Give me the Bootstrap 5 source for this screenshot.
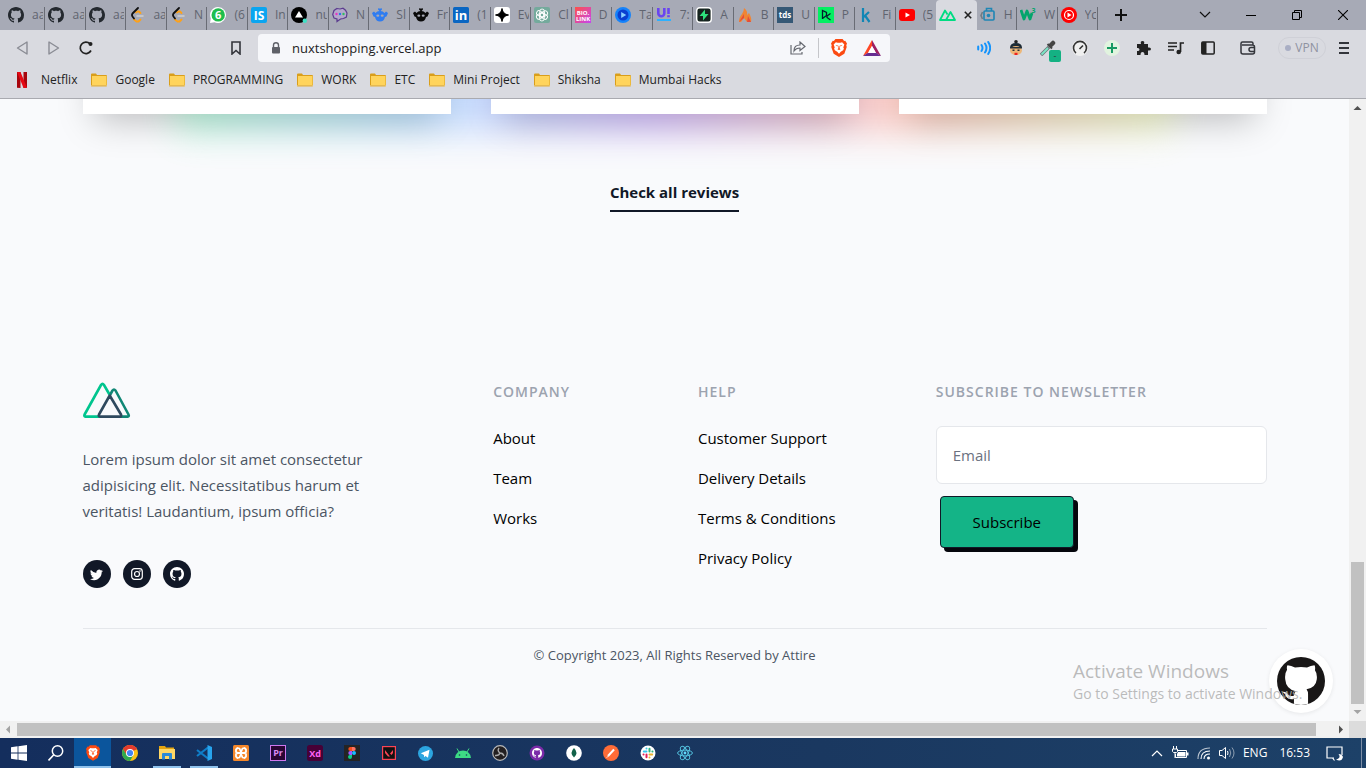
<!DOCTYPE html>
<html lang="en">
<head>
<meta charset="utf-8">
<meta name="viewport" content="width=device-width, initial-scale=1">
<title>nuxtshopping.vercel.app</title>
<link href="https://cdn.jsdelivr.net/npm/bootstrap@5.3.0/dist/css/bootstrap.min.css" rel="stylesheet">
<style>
  body { font-family: "Open Sans", "Noto Sans", sans-serif; font-size: 15px; line-height: 24px; color: #000; }
  svg { display: block; flex: none; }
  svg text { font-family: "Open Sans", sans-serif; font-weight: 700; }
  button { border: 0; background: none; padding: 0; color: inherit; }
  a { color: inherit; text-decoration: none; }

  /* tab strip */
  .tabstrip { height: 30px; background: #a7aab6; padding-left: 5px; }
  .tab-item { flex: 1 1 0; min-width: 0; height: 30px; padding: 0 2px 0 3px; gap: 8px; font-size: 12px; color: #60646f; position: relative; }
  .tab-item:not(.current)::after { content: ""; position: absolute; right: 0; top: 7px; bottom: 0; width: 1px; background: #696c75; }
  .tab-item span { overflow: hidden; white-space: nowrap; flex: 1 1 0; }
  .tab-item.current { background: #d9dae0; border-radius: 4px 4px 0 0; }
  .tab-item.before-current::after { display: none; }
  .new-tab { width: 46px; height: 30px; flex: none; }
  .win-controls { flex: none; margin-left: 38px; }
  .win-btn { width: 46px; height: 30px; }

  /* toolbar and bookmarks */
  .toolbar { height: 36px; background: #d9dae0; padding: 0 6px; color: #33353b; }
  .tool { width: 32px; height: 32px; position: relative; }
  .address { flex: 1 1 0; margin: 0 78px 0 118px; }
  .urlbox { height: 28px; border-radius: 4px; background: #f6f7fa; padding: 0 9px 0 12px; margin-left: 6px; }
  .urlbox input { border: 0; outline: 0; background: none; font-size: 13px; line-height: 20px; padding: 0; color: #222; min-width: 0; margin-left: 10px; }
  .tag-dot { position: absolute; right: 3px; bottom: 2px; width: 12px; height: 12px; border-radius: 2px; background: #14b183; font-size: 9px; line-height: 11px; text-align: center; }
  .vpn { width: 48px; height: 22px; border: 1px solid #cfd0d7; border-radius: 11px; font-size: 12px; color: #8f92a0; margin: 0 2px 0 14px; line-height: 20px; }
  .vpn i { width: 6px; height: 6px; border-radius: 50%; background: #a9aec4; margin-right: 4px; }
  .bookmarks { height: 33px; background: #d9dae0; border-bottom: 1px solid #a9aab0; padding: 0 14px 4px; gap: 14px; font-size: 12px; color: #222; }
  .bookmarks a { gap: 8px; white-space: nowrap; }
  .bookmarks a:first-child { gap: 11px; }

  /* page */
  .viewport { background: #f9fafc; overflow: hidden; position: relative; min-width: 0; }
  .wrap { max-width: 1184px; margin: 0 auto; }
  .reviews { display: grid; grid-template-columns: repeat(3, 1fr); gap: 40px; position: relative; }
  .glow { position: absolute; left: 8%; right: 8%; bottom: -18px; height: 200px; opacity: .31; filter: blur(18px); background: linear-gradient(90deg, #44ff9a -1%, #44b0ff 23%, #8b44ff 48%, #ff6644 73%, #ebff70 99%); }
  .review { height: 15px; background: #fff; position: relative; }
  .review::before { content: ""; position: absolute; inset: -60px 0 0; box-shadow: 0 18px 36px -12px rgba(0,0,0,.25); z-index: -1; }
  .review-row { isolation: isolate; }
  .all-reviews { margin-top: 66px; padding-bottom: 6px; border-bottom: 2px solid #111827; font-weight: 700; color: #111827; }
  .foot { margin-top: 170px; }
  .foot-grid { display: grid; grid-template-columns: 411fr 205fr 238fr 331fr; }
  .blurb { color: #4b5563; line-height: 26px; max-width: 290px; margin: 28px 0 36px; }
  .social { width: 28px; height: 28px; border-radius: 50%; background: #111827; color: #fff; }
  .foot h2, .foot label { font-size: 14px; line-height: 20px; font-weight: 600; letter-spacing: 1px; color: #9ca3af; margin: 0; display: block; }
  .foot ul { margin: 24px 0 0; padding: 0; list-style: none; }
  .foot li { height: 40px; }
  .email { height: 58px; border: 1px solid #e5e7eb; border-radius: 6px; padding: 0 16px; margin-top: 24px; font-size: 15px; width: 100%; background: #fff; }
  .email::placeholder { color: #6b7280; }
  .subscribe { width: 134px; height: 52px; margin: 12px 4px 0; border: 1px solid #111827; border-radius: 4px; background: #14b487; box-shadow: 4px 4px 0 #05060c; }
  .legal { margin-top: 40px; border-top: 1px solid #e5e7eb; padding-top: 14px; font-size: 13px; color: #4b5563; }
  .gh-float { position: absolute; right: 16px; bottom: 8px; width: 64px; height: 64px; border-radius: 50%; background: #fff; box-shadow: 0 1px 4px rgba(0,0,0,.08); color: #191717; }
  .watermark { position: absolute; left: calc(100% - 293px); bottom: 64px; color: rgba(175,175,175,.85); font-size: 14px; line-height: 20px; white-space: nowrap; pointer-events: none; }
  .watermark strong { display: block; font-weight: 400; font-size: 19px; line-height: 26px; }

  /* scroll bars */
  .vbar { width: 17px; background: #f1f1f1; }
  .hbar { height: 17px; background: #f1f1f1; }
  .bar-corner { width: 17px; height: 17px; background: #dcdcdc; }
  .arrow { width: 17px; height: 17px; }
  .vthumb { width: 13px; background: #c1c1c1; flex: 0 0 142px; }
  .hthumb { height: 13px; background: #c1c1c1; flex: 1; margin-right: 16px; }

  /* task bar */
  .taskbar { height: 30px; background: linear-gradient(90deg, #142e5d, #1a3860 60%, #1d4168); color: #fff; font-size: 12px; }
  .task { width: 37px; height: 30px; }
  .task.running { background: linear-gradient(#8fc2ec, #8fc2ec) center bottom / 28px 2px no-repeat; }
  .task.focused { background: linear-gradient(#8fc2ec, #8fc2ec) center bottom / 100% 2px no-repeat, #0b559c; }
  .tray { gap: 8px; padding-right: 4px; }
  .desk-edge { border-left: 1px solid #7d8ea6; height: 30px; margin-left: 10px; }
</style>
</head>
<body class="vh-100 d-flex flex-column overflow-hidden">

<svg width="0" height="0" class="position-absolute" aria-hidden="true">
  <symbol id="octocat" viewBox="0 0 16 16"><path fill="currentColor" d="M8 0C3.58 0 0 3.58 0 8c0 3.54 2.29 6.53 5.47 7.59.4.07.55-.17.55-.38 0-.19-.01-.82-.01-1.49-2.01.37-2.53-.49-2.69-.94-.09-.23-.48-.94-.82-1.13-.28-.15-.68-.52-.01-.53.63-.01 1.08.58 1.23.82.72 1.21 1.87.87 2.33.66.07-.52.28-.87.51-1.07-1.78-.2-3.64-.89-3.64-3.95 0-.87.31-1.59.82-2.15-.08-.2-.36-1.02.08-2.12 0 0 .67-.21 2.2.82.64-.18 1.32-.27 2-.27.68 0 1.36.09 2 .27 1.53-1.04 2.2-.82 2.2-.82.44 1.1.16 1.92.08 2.12.51.56.82 1.27.82 2.15 0 3.07-1.87 3.75-3.65 3.95.29.25.54.73.54 1.48 0 1.07-.01 1.93-.01 2.2 0 .21.15.46.55.38A8.012 8.012 0 0 0 16 8c0-4.42-3.58-8-8-8z"/></symbol>
  <symbol id="badge-cat" viewBox="0 0 32 32"><circle cx="16" cy="16" r="16" fill="#191717"/><path fill="#fff" d="M6.700 8.500q-.4-2 .3-3 2.500.3 5 1.500 4-.8 8 0 2.500-1.300 5-1.500.7 1 .3 3.300Q27 11 26.500 15q-.6 5.500-6.800 6.500 1 1.500 1 3V31.200a16 16 0 0 1-9.400 0V28q-4.500.8-5.800-3-.6-1-1.800-1.700 2.400-.6 3.900 2 1.200 1.200 3.600.5.300-1.900 1.300-3Q6 21.500 5.500 15 5 11 6.700 8.500z"/></symbol>
  <symbol id="leet" viewBox="0 0 16 16"><g fill="none" stroke-width="1.800" stroke-linecap="round" stroke-linejoin="round"><path stroke="#ffa116" d="m5 12.500 2.500 2h2l2-2M7 5.500l1.500-1H10l1.500 1.500"/><path stroke="#111" d="M9 1 3.500 6.500Q2.500 8 3.500 9.500L5 11.500"/><path stroke="#d0d0d0" stroke-width="1.500" d="M8 9h6"/></g></symbol>
  <symbol id="robot" viewBox="0 0 16 16"><path fill="currentColor" d="M6.500 1 8 1.800 9.500 1l.5 1.500L8.500 4q2.500.2 4 2L14 4.500l2 1.500-1.500 3.500-1.500.5q-1 4.500-5 4.500T3 10l-1.500-.5L0 6l2-1.500L3.500 6q1.500-1.800 4-2L6 2.500z"/><ellipse cx="5.800" cy="8.700" rx="1.500" ry="1.100" fill="#a7aab6"/><ellipse cx="10.200" cy="8.700" rx="1.500" ry="1.100" fill="#a7aab6"/></symbol>
  <symbol id="folder" viewBox="0 0 16 14"><path fill="#d99e1b" d="M0 1.500Q0 .5 1 .5h4l1 1.500h9q1 0 1 1V12H0z"/><path fill="#ffd45c" d="M1 3h14.500v9.500H1z"/><path fill="#e5b037" d="M0 12.300h15.800v.7q0 .6-.8.6H1q-1 0-1-.6z"/></symbol>
  <symbol id="lion" viewBox="0 0 18 20"><path fill="#fb4a12" d="M5 0h8l1.800 2L16 1.800 18 5l-.8 2 .5 2L15 16.500 9 20l-6-3.500L.3 9l.5-2L0 5l2-3.200L3.200 2z"/><path fill="#fff" d="m5.500 3.500 2 .5h3l2-.5L15 6l-1.200 3.500.7 1-.8 2-2.700 1.700L9 16.500l-2-2.300-2.700-1.700-.8-2 .7-1L3 6z"/><path fill="#fb4a12" d="m5 6.500 2.800.6-.6 1.200zM13 6.500l-2.800.6.6 1.200zM8.500 7.500h1l.3 3 1 .8L9 12.200l-1.800-.9 1-.8z"/></symbol>
</svg>

<header>
  <div class="tabstrip d-flex">
    <div class="d-flex flex-grow-1" role="tablist">
      <div class="tab-item d-flex align-items-center"><svg width="16" height="16" color="#24292f"><use href="#octocat"/></svg><span>aa</span></div>
      <div class="tab-item d-flex align-items-center"><svg width="16" height="16" color="#24292f"><use href="#octocat"/></svg><span>aa</span></div>
      <div class="tab-item d-flex align-items-center"><svg width="16" height="16" color="#24292f"><use href="#octocat"/></svg><span>aa</span></div>
      <div class="tab-item d-flex align-items-center"><svg width="16" height="16"><use href="#leet"/></svg><span>aa</span></div>
      <div class="tab-item d-flex align-items-center"><svg width="16" height="16"><use href="#leet"/></svg><span>N</span></div>
      <div class="tab-item d-flex align-items-center"><svg width="16" height="16" viewBox="0 0 16 16"><path fill="#fff" d="M8 0a8 8 0 1 1-3.500 15.200L0 16l.8-4.500A8 8 0 0 1 8 0z"/><circle cx="8.200" cy="7.900" r="6.700" fill="#1fbe4d"/><text x="8.200" y="12" font-size="11" text-anchor="middle" fill="#fff">6</text></svg><span>(6</span></div>
      <div class="tab-item d-flex align-items-center"><svg width="16" height="16" viewBox="0 0 16 16"><rect width="16" height="16" rx="2" fill="#0aa5f0"/><text x="8" y="12.500" font-size="12" text-anchor="middle" fill="#fff">IS</text></svg><span>In</span></div>
      <div class="tab-item d-flex align-items-center"><svg width="16" height="16" viewBox="0 0 16 16"><circle cx="8" cy="8" r="8" fill="#000"/><path fill="#fff" d="m8 4 4 6.500H4z"/><circle cx="13.800" cy="13.800" r="2.200" fill="#3fe0c5"/></svg><span>nu</span></div>
      <div class="tab-item d-flex align-items-center"><svg width="16" height="16" viewBox="0 0 16 16"><path fill="#b4a9cc" stroke="#5c3d8f" stroke-width="1.200" d="M5 1.500 8 2l3-.8 2.500 2L15 6l-.6 4-2.900 1.500L8.500 12 5 14.500V12l-3-1-1.300-3.500L2 3.500z"/><circle cx="4.500" cy="7" r="1.200" fill="#e735c2"/><circle cx="8" cy="7" r="1.200" fill="#2c74e8"/><circle cx="11.500" cy="7" r="1.200" fill="#30c060"/></svg><span>N</span></div>
      <div class="tab-item d-flex align-items-center"><svg width="16" height="16" color="#2f7cf0"><use href="#robot"/></svg><span>Sl</span></div>
      <div class="tab-item d-flex align-items-center"><svg width="16" height="16" color="#0a0a0a"><use href="#robot"/></svg><span>Fr</span></div>
      <div class="tab-item d-flex align-items-center"><svg width="16" height="16" viewBox="0 0 16 16"><rect width="16" height="16" rx="1.500" fill="#0a66c2"/><text x="8" y="13" font-size="13" text-anchor="middle" fill="#fff">in</text></svg><span>(1</span></div>
      <div class="tab-item d-flex align-items-center"><svg width="16" height="16" viewBox="0 0 16 16"><rect width="16" height="16" rx="3" fill="#fff"/><path d="M8 1.500Q8.800 7.200 14.500 8 8.800 8.800 8 14.500 7.200 8.800 1.500 8 7.200 7.200 8 1.500z" stroke="#000" stroke-width="1"/></svg><span>Ev</span></div>
      <div class="tab-item d-flex align-items-center"><svg width="16" height="16" viewBox="0 0 16 16"><rect width="16" height="16" rx="2" fill="#74aa9c"/><g fill="none" stroke="#fff" stroke-width=".9"><rect x="5.700" y="2" width="4.800" height="8" rx="2.400"/><rect x="5.700" y="2" width="4.800" height="8" rx="2.400" transform="rotate(60 8 8)"/><rect x="5.700" y="2" width="4.800" height="8" rx="2.400" transform="rotate(120 8 8)"/><rect x="5.700" y="2" width="4.800" height="8" rx="2.400" transform="rotate(180 8 8)"/><rect x="5.700" y="2" width="4.800" height="8" rx="2.400" transform="rotate(240 8 8)"/><rect x="5.700" y="2" width="4.800" height="8" rx="2.400" transform="rotate(300 8 8)"/></g></svg><span>Cl</span></div>
      <div class="tab-item d-flex align-items-center"><svg width="16" height="16" viewBox="0 0 16 16"><defs><linearGradient id="bl" x2="1" y2="1"><stop stop-color="#ff5148"/><stop offset="1" stop-color="#c445f2"/></linearGradient></defs><rect width="16" height="16" fill="url(#bl)"/><text x="8" y="7.500" font-size="6" text-anchor="middle" fill="#fff">BIO.</text><text x="8" y="13.500" font-size="6" text-anchor="middle" fill="#fff">LINK</text></svg><span>D</span></div>
      <div class="tab-item d-flex align-items-center"><svg width="16" height="16" viewBox="0 0 16 16"><circle cx="8" cy="8" r="8" fill="#1683fa"/><circle cx="8" cy="8" r="5.500" fill="#0b3fd0"/><path fill="#8ad0ff" d="m6.200 5 5 3-5 3z"/></svg><span>Ta</span></div>
      <div class="tab-item d-flex align-items-center"><svg width="16" height="16" viewBox="0 0 16 16"><path fill="none" stroke="#6a45f0" stroke-width="2.600" d="M2.300 1v5.200a3 3 0 0 0 6 0V1M12.500 1v6"/><path fill="#6a45f0" d="M11.200 8.200h2.600v2h-2.600z"/><path fill="#2cb1ff" d="M1 12h14v2H1z"/></svg><span>7:</span></div>
      <div class="tab-item d-flex align-items-center"><svg width="16" height="16" viewBox="0 0 16 16"><rect x=".7" y=".7" width="14.600" height="14.600" rx="3" fill="#16231e" stroke="#fff" stroke-width="1.400"/><path fill="#2ee27c" d="M9 2.500 3.500 9H7v4.500L12.500 7H9z"/></svg><span>A</span></div>
      <div class="tab-item d-flex align-items-center"><svg width="16" height="16" viewBox="0 0 16 16"><path fill="#f08534" d="M7 1q4 3 3 7l2-2q3 5 2 9h-4l-3-4-3 4H2q0-5 3-8 2-3 2-6z"/><path fill="#e54d3b" d="M2 15 7 7v4zM10 15l1-6 3 6z"/></svg><span>B</span></div>
      <div class="tab-item d-flex align-items-center"><svg width="16" height="16" viewBox="0 0 16 16"><rect width="16" height="16" fill="#355876"/><text x="8" y="11" font-size="8" text-anchor="middle" fill="#fff">tds</text></svg><span>U</span></div>
      <div class="tab-item d-flex align-items-center"><svg width="16" height="16" viewBox="0 0 16 16"><rect width="16" height="16" fill="#03ef62"/><path fill="none" stroke="#05192d" stroke-width="1.300" d="M4.500 12V3.500l4 2v3l-4 3M12.500 6.500 9 9v1.500l3.500 2.500"/></svg><span>P</span></div>
      <div class="tab-item d-flex align-items-center"><svg width="16" height="16" viewBox="0 0 16 16"><path fill="none" stroke="#1186b5" stroke-width="2.200" d="M5 1v14M11 5l-5.500 5M7 8.500 11.500 15"/></svg><span>Fi</span></div>
      <div class="tab-item before-current d-flex align-items-center"><svg width="16" height="16" viewBox="0 0 16 16"><rect y="2" width="16" height="12" rx="3" fill="#f00"/><path fill="#fff" d="m6.500 5.500 4.500 2.500-4.500 2.500z"/></svg><span>(5</span></div>
      <div class="tab-item current d-flex align-items-center"><svg width="17" height="16" viewBox="0 0 17 16"><path fill="none" stroke="#00dc82" stroke-width="1.800" stroke-linejoin="round" d="M9 13H1L6 3.500l2.500 4M7 13l4.500-8L16 13z"/></svg><button class="ms-n1" aria-label="Close tab"><svg width="8" height="8" viewBox="0 0 10 10"><path stroke="#222" stroke-width="2" d="m1 1 8 8m0-8-8 8"/></svg></button></div>
      <div class="tab-item d-flex align-items-center"><svg width="16" height="16" viewBox="0 0 16 16"><g fill="none" stroke="#1f86b5" stroke-width="1.600"><rect x="4" y="4" width="10" height="9" rx="1"/><path stroke="#6f7c84" d="M2.500 5 1 8.500 2.500 12"/><path d="M6.500 4V1.500h5V4"/></g><circle cx="8.500" cy="8.500" r="1.800" fill="#1f86b5"/></svg><span>H</span></div>
      <div class="tab-item d-flex align-items-center"><svg width="16" height="16" viewBox="0 0 16 16"><path fill="none" stroke="#04a56c" stroke-width="2.800" stroke-linejoin="round" d="m1 3 3 9 3-8 3 8 2-6"/><text x="13.500" y="6" font-size="7" text-anchor="middle" fill="#04a56c">3</text></svg><span>W</span></div>
      <div class="tab-item d-flex align-items-center"><svg width="16" height="16" viewBox="0 0 16 16"><circle cx="8" cy="8" r="8" fill="#f00"/><circle cx="8" cy="8" r="4.500" fill="none" stroke="#fff" stroke-width="1.200"/><path fill="#fff" d="m6.500 5.500 4 2.500-4 2.500z"/></svg><span>Yc</span></div>
    </div>
    <button class="new-tab d-flex align-items-center justify-content-center" aria-label="New tab"><svg width="12" height="12" viewBox="0 0 12 12"><path stroke="#111" stroke-width="2" d="M6 0v12M0 6h12"/></svg></button>
    <div class="win-controls d-flex">
      <button class="win-btn d-flex align-items-center justify-content-center" aria-label="Search tabs"><svg width="12" height="8" viewBox="0 0 12 8"><path fill="none" stroke="#111" stroke-width="1.200" d="m1 1 5 5 5-5"/></svg></button>
      <button class="win-btn d-flex align-items-center justify-content-center" aria-label="Minimize"><svg width="10" height="1"><path fill="#000" d="M0 0h10v1H0z"/></svg></button>
      <button class="win-btn d-flex align-items-center justify-content-center" aria-label="Restore"><svg width="10" height="10" viewBox="0 0 10 10"><path fill="none" stroke="#000" d="M.5 2.500h7v7h-7zM2.500 2.500v-2h7v7h-2"/></svg></button>
      <button class="win-btn d-flex align-items-center justify-content-center" aria-label="Close"><svg width="10" height="10" viewBox="0 0 10 10"><path stroke="#000" stroke-width="1.100" d="m0 0 10 10M10 0 0 10"/></svg></button>
    </div>
  </div>

  <nav class="toolbar d-flex align-items-center">
    <button class="tool d-flex align-items-center justify-content-center" aria-label="Back"><svg width="12" height="14" viewBox="0 0 12 14"><path fill="none" stroke="#8a8c94" stroke-width="1.400" stroke-linejoin="round" d="M11 1v12L1.500 7z"/></svg></button>
    <button class="tool d-flex align-items-center justify-content-center" aria-label="Forward"><svg width="12" height="14" viewBox="0 0 12 14"><path fill="none" stroke="#8a8c94" stroke-width="1.400" stroke-linejoin="round" d="M1 1v12l9.500-6z"/></svg></button>
    <button class="tool d-flex align-items-center justify-content-center" aria-label="Reload"><svg width="14" height="14" viewBox="0 0 14 14"><path fill="none" stroke="#222" stroke-width="1.700" d="M12 9.500A5.700 5.700 0 1 1 11 2.900"/><circle cx="11.500" cy="3" r="2" fill="#222"/></svg></button>
    <div class="address d-flex align-items-center">
      <button class="tool d-flex align-items-center justify-content-center" aria-label="Bookmark this page"><svg width="10" height="14" viewBox="0 0 10 14"><path fill="none" stroke="#33353b" stroke-width="1.600" d="M1 1h8v12L5 9.500 1 13z"/></svg></button>
      <div class="urlbox d-flex align-items-center flex-grow-1">
        <svg width="12" height="12" viewBox="0 0 12 12"><path fill="none" stroke="#5f6168" stroke-width="1.400" d="M3.500 6V3.200a2.500 2.500 0 0 1 5 0V6"/><rect x="2" y="5" width="8" height="6.500" rx="1" fill="#5f6168"/></svg>
        <input class="flex-grow-1" type="text" aria-label="Address" value="nuxtshopping.vercel.app">
        <button class="me-2" aria-label="Share"><svg width="16" height="14" viewBox="0 0 16 14"><path fill="none" stroke="#666970" stroke-width="1.200" d="M1 4v9h11v-2M4 10q0-6 6-6V1l5 4.500-5 4V7Q6 7 4 10z"/></svg></button>
        <span class="vr mx-1 my-1"></span>
        <button class="ms-1 ps-1" aria-label="Brave Shields"><svg width="16" height="18"><use href="#lion"/></svg></button>
        <button class="ms-3" aria-label="Brave Rewards"><svg width="18" height="16" viewBox="0 0 18 16"><path fill="#ff4724" d="M9 0 0 16l5-3 4-7z"/><path fill="#9e1f63" d="m9 0 9 16-5-3-4-7z"/><path fill="#662d91" d="M0 16h18l-5-3.200H5z"/><path fill="#fff" d="m9 6 4 7H5z"/></svg></button>
      </div>
    </div>
    <button class="tool d-flex align-items-center justify-content-center" aria-label="Read aloud"><svg width="14" height="14" viewBox="0 0 14 14"><g fill="none" stroke="#1593fb" stroke-width="2" stroke-linecap="round"><path d="M1.200 5.500v3M4.500 4q2 3 0 6M8 2.500q3 4.500 0 9M11.200 1q4 6 0 12"/></g></svg></button>
    <button class="tool d-flex align-items-center justify-content-center" aria-label="Honey"><svg width="14" height="16" viewBox="0 0 14 16"><circle cx="7" cy="1.800" r="1.800" fill="#222"/><path fill="#1c2a35" d="M1 8q0-5 6-5t6 5z"/><ellipse cx="7" cy="10.500" rx="6" ry="4.500" fill="#edb778"/><path fill="#27313a" d="M1 7h12v1.600H1zM3.500 9.500h2V11h-2zM8.500 9.500h2V11h-2z"/><path fill="#e22" d="M5.500 12.800h3V15h-3z"/></svg></button>
    <button class="tool d-flex align-items-center justify-content-center" aria-label="Colour picker"><svg width="16" height="16" viewBox="0 0 16 16"><path stroke="#6a7276" stroke-width="3.400" d="m1 15 8-8"/><path stroke="#7ce6c6" stroke-width="2" d="m1.500 14.500 6.500-6.500"/><path stroke="#444" stroke-width="4.500" stroke-linecap="round" d="m11 5 2-2"/><path stroke="#444" stroke-width="2" d="m7.500 4 4.500 4.500"/></svg><span class="tag-dot">-</span></button>
    <button class="tool d-flex align-items-center justify-content-center" aria-label="Speed"><svg width="16" height="16" viewBox="0 0 16 16"><circle cx="8" cy="8" r="8" fill="#efefef"/><path fill="none" stroke="#333" stroke-width="1.600" d="M4 13a6.500 6.500 0 1 1 8 0M7.500 9 11 5.500"/></svg></button>
    <button class="tool d-flex align-items-center justify-content-center" aria-label="Add"><svg width="16" height="16" viewBox="0 0 16 16"><circle cx="8" cy="8" r="8" fill="#e1f3df"/><path stroke="#169b62" stroke-width="2" d="M8 3v10M3 8h10"/></svg></button>
    <button class="tool d-flex align-items-center justify-content-center" aria-label="Extensions"><svg width="16" height="16" viewBox="0 0 16 16"><path fill="#222" d="M1 4h4q-1-3 1.500-3T8 4h4v3.500q3-.5 3 1.500t-3 1.500V15H8.500q0-3-2-3t-2 3H1v-4q2.500.5 2.500-1.500T1 8z"/></svg></button>
    <button class="tool d-flex align-items-center justify-content-center" aria-label="Playlist"><svg width="16" height="14" viewBox="0 0 16 14"><path fill="none" stroke="#222" stroke-width="1.700" d="M0 2h9M0 5.500h9M0 9h6M12.500 11V2H16"/><circle cx="10.700" cy="11" r="2.300" fill="#222"/></svg></button>
    <button class="tool d-flex align-items-center justify-content-center" aria-label="Sidebar"><svg width="14" height="14" viewBox="0 0 14 14"><rect x=".8" y="1" width="12.400" height="12" rx="1" fill="none" stroke="#222" stroke-width="1.500"/><path fill="#222" d="M1 1h4.500v12H1z"/></svg></button>
    <button class="tool d-flex align-items-center justify-content-center ms-2" aria-label="Wallet"><svg width="16" height="14" viewBox="0 0 16 14"><path fill="none" stroke="#33353b" stroke-width="1.500" d="M13 4V2.500Q13 1 11.500 1h-9Q1 1 1 2.500v8.500q0 2 2 2h9.500q2 0 2-2V6q0-2-2-2H2M15 6.500h-4a2 2 0 0 0 0 4h4"/></svg></button>
    <button class="vpn d-flex align-items-center justify-content-center"><i></i>VPN</button>
    <button class="tool d-flex align-items-center justify-content-center" aria-label="Menu"><svg width="10" height="12" viewBox="0 0 10 12"><path stroke="#33353b" stroke-width="2" d="M0 1h10M0 6h10M0 11h10"/></svg></button>
  </nav>

  <nav class="bookmarks d-flex align-items-center">
    <a href="#" class="d-flex align-items-center"><svg width="16" height="16" viewBox="0 0 16 16"><path fill="#a8050d" d="M3 0h3.500v16L3 15.800zM9.500 0H13v15.800l-3.500.2z"/><path fill="#e50914" d="M3 0h3.500L13 15.800 9.500 16z"/></svg>Netflix</a>
    <a href="#" class="d-flex align-items-center"><svg width="16" height="14"><use href="#folder"/></svg>Google</a>
    <a href="#" class="d-flex align-items-center"><svg width="16" height="14"><use href="#folder"/></svg>PROGRAMMING</a>
    <a href="#" class="d-flex align-items-center"><svg width="16" height="14"><use href="#folder"/></svg>WORK</a>
    <a href="#" class="d-flex align-items-center"><svg width="16" height="14"><use href="#folder"/></svg>ETC</a>
    <a href="#" class="d-flex align-items-center"><svg width="16" height="14"><use href="#folder"/></svg>Mini Project</a>
    <a href="#" class="d-flex align-items-center"><svg width="16" height="14"><use href="#folder"/></svg>Shiksha</a>
    <a href="#" class="d-flex align-items-center"><svg width="16" height="14"><use href="#folder"/></svg>Mumbai Hacks</a>
  </nav>
</header>

<div class="d-flex flex-grow-1 overflow-hidden">
  <main class="viewport flex-grow-1">
    <div class="wrap">
      <section class="review-row text-center">
        <div class="reviews">
          <div class="glow"></div>
          <div class="review"></div>
          <div class="review"></div>
          <div class="review"></div>
        </div>
        <a href="#" class="all-reviews d-inline-block">Check all reviews</a>
      </section>
      <footer class="foot">
        <div class="foot-grid">
          <div>
            <svg width="48" height="36" viewBox="0 0 48 36"><g fill="none" stroke-width="2.600" stroke-linejoin="round"><path stroke="#00c58e" d="M17 34.600H2.500Q.8 34.300 1.600 32.500L18 3Q19.500.8 21 3l5.500 9.500"/><path stroke="#108775" d="m27 13 2.500-4.500q1.500-2 3 0l13 24Q46.500 34.300 44.500 34.600H37"/><path stroke="#2f495e" d="M26.700 13.500 38 32.500q.8 2-1.200 2.100H17.200Q15 34.400 16 32.500z"/></g></svg>
            <p class="blurb">Lorem ipsum dolor sit amet consectetur adipisicing elit. Necessitatibus harum et veritatis! Laudantium, ipsum officia?</p>
            <div class="d-flex" style="gap:12px">
              <a href="#" class="social d-flex align-items-center justify-content-center" aria-label="Twitter"><svg width="13" height="13" viewBox="0 0 16 16"><path fill="currentColor" d="M5.026 15c6.038 0 9.341-5.003 9.341-9.334 0-.14 0-.282-.006-.422A6.685 6.685 0 0 0 16 3.542a6.658 6.658 0 0 1-1.889.518 3.301 3.301 0 0 0 1.447-1.817 6.533 6.533 0 0 1-2.087.793A3.286 3.286 0 0 0 7.875 6.030a9.325 9.325 0 0 1-6.767-3.429 3.289 3.289 0 0 0 1.018 4.382A3.323 3.323 0 0 1 .64 6.575v.045a3.288 3.288 0 0 0 2.632 3.218 3.203 3.203 0 0 1-.865.115 3.230 3.230 0 0 1-.614-.057 3.283 3.283 0 0 0 3.067 2.277A6.588 6.588 0 0 1 .78 13.580a6.320 6.320 0 0 1-.78-.045A9.344 9.344 0 0 0 5.026 15z"/></svg></a>
              <a href="#" class="social d-flex align-items-center justify-content-center" aria-label="Instagram"><svg width="12" height="12" viewBox="0 0 12 12"><g fill="none" stroke="#fff" stroke-width="1.200"><rect x=".7" y=".7" width="10.600" height="10.600" rx="2.800"/><circle cx="6" cy="6" r="2.500"/></g><circle cx="9" cy="3" r=".8" fill="#fff"/></svg></a>
              <a href="#" class="social d-flex align-items-center justify-content-center" aria-label="GitHub"><svg width="14" height="14"><use href="#octocat"/></svg></a>
            </div>
          </div>
          <div>
            <h2>COMPANY</h2>
            <ul>
              <li><a href="#">About</a></li>
              <li><a href="#">Team</a></li>
              <li><a href="#">Works</a></li>
            </ul>
          </div>
          <div>
            <h2>HELP</h2>
            <ul>
              <li><a href="#">Customer Support</a></li>
              <li><a href="#">Delivery Details</a></li>
              <li><a href="#">Terms &amp; Conditions</a></li>
              <li><a href="#">Privacy Policy</a></li>
            </ul>
          </div>
          <form>
            <label for="email">SUBSCRIBE TO NEWSLETTER</label>
            <input class="email" id="email" type="email" placeholder="Email">
            <button class="subscribe" type="button">Subscribe</button>
          </form>
        </div>
        <p class="legal text-center mb-0">© Copyright 2023, All Rights Reserved by Attire</p>
      </footer>
    </div>
    <a href="#" class="gh-float d-flex align-items-center justify-content-center" aria-label="Source on GitHub"><svg width="48" height="48"><use href="#badge-cat"/></svg></a>
  </main>
  <div class="vbar d-flex flex-column align-items-center">
    <svg class="arrow" viewBox="0 0 17 17"><path fill="#505050" d="M4.500 11h8l-4-4z"/></svg>
    <div class="flex-grow-1"></div>
    <div class="vthumb"></div>
    <svg class="arrow" viewBox="0 0 17 17"><path fill="#a3a3a3" d="M4.500 6h8l-4 4z"/></svg>
  </div>
</div>
<div class="d-flex">
  <div class="hbar d-flex align-items-center flex-grow-1">
    <svg class="arrow" viewBox="0 0 17 17"><path fill="#a3a3a3" d="M10 4.500v8l-4-4z"/></svg>
    <div class="hthumb"></div>
    <svg class="arrow" viewBox="0 0 17 17"><path fill="#505050" d="M7 4.500v8l4-4z"/></svg>
  </div>
  <div class="bar-corner"></div>
</div>

<footer class="taskbar d-flex align-items-center">
  <button class="task d-flex align-items-center justify-content-center" aria-label="Start"><svg width="16" height="16" viewBox="0 0 16 16"><path fill="#fff" d="m0 2.200 6.600-.9v6.300H0zM7.400 1.200 16 0v7.600H7.400zM0 8.400h6.600v6.300L0 13.800zM7.400 8.400H16V16l-8.600-1.200z"/></svg></button>
  <button class="task d-flex align-items-center justify-content-center" aria-label="Search"><svg width="16" height="16" viewBox="0 0 16 16"><circle cx="9.500" cy="6" r="5.200" fill="none" stroke="#fff" stroke-width="1.500"/><path stroke="#fff" stroke-width="1.600" d="M5.800 9.700.5 15.500"/></svg></button>
  <button class="task focused d-flex align-items-center justify-content-center" aria-label="Brave"><svg width="14" height="16"><use href="#lion"/></svg></button>
  <button class="task d-flex align-items-center justify-content-center" aria-label="Chrome"><svg width="16" height="16" viewBox="0 0 16 16"><circle cx="8" cy="8" r="8" fill="#fbc116"/><path fill="#e33b2e" d="M8 8 1.100 4A8 8 0 0 1 14.900 4z"/><path fill="#e33b2e" d="M1.100 4 4.500 10 8 4.500h6.900A8 8 0 0 0 1.100 4z"/><path fill="#2da94f" d="M1.100 4A8 8 0 0 0 8 16l3.500-6H4.600z"/><circle cx="8" cy="8" r="4" fill="#fff"/><circle cx="8" cy="8" r="3.100" fill="#4285f4"/></svg></button>
  <button class="task running d-flex align-items-center justify-content-center" aria-label="File Explorer"><svg width="16" height="16" viewBox="0 0 16 16"><path fill="#e5a50f" d="M0 1h6l1 1.500h8V7H0z"/><path fill="#ffd866" d="M0 4h16v10H0z"/><path fill="#2b8ad8" d="M3 14.500V9q0-1 1-1h8q1 0 1 1v5.500h-3V11H6v3.500z"/></svg></button>
  <button class="task running d-flex align-items-center justify-content-center" aria-label="Visual Studio Code"><svg width="16" height="16" viewBox="0 0 16 16"><path fill="none" stroke="#0f7ec9" stroke-width="2.200" d="m1 5 11 8.500M1 11 12 2.500"/><path fill="#27a4ee" d="M11.500 0 16 2v12l-4.500 2z"/></svg></button>
  <button class="task d-flex align-items-center justify-content-center" aria-label="XAMPP"><svg width="16" height="16" viewBox="0 0 16 16"><rect width="16" height="16" rx="1.500" fill="#f5872a"/><path fill="none" stroke="#fff" stroke-width="1.800" stroke-linejoin="round" d="M3 7V4.500L4.500 3l2 .5L8 7l1.500-3.500 2-.5L13 4.500V7l-2 1 2 1v2.500L11.500 13l-2-.5L8 9l-1.500 3.500-2 .5L3 11.500V9l2-1zM5 8h6"/></svg></button>
  <button class="task d-flex align-items-center justify-content-center" aria-label="Premiere Pro"><svg width="16" height="16" viewBox="0 0 16 16"><rect x=".5" y=".5" width="15" height="15" fill="#2a0634" stroke="#ce77ef"/><text x="8" y="11.300" font-size="9" text-anchor="middle" fill="#d98cf5">Pr</text></svg></button>
  <button class="task d-flex align-items-center justify-content-center" aria-label="Adobe XD"><svg width="16" height="16" viewBox="0 0 16 16"><rect width="16" height="16" rx="2.500" fill="#470137"/><text x="8" y="11.500" font-size="9" text-anchor="middle" fill="#ff61f6">Xd</text></svg></button>
  <button class="task d-flex align-items-center justify-content-center" aria-label="Figma"><svg width="16" height="16" viewBox="0 0 16 16"><rect width="16" height="16" fill="#242424"/><path fill="#f24e1e" d="M8 2H6.300a2 2 0 0 0 0 4H8z"/><path fill="#ff7262" d="M8 2h1.700a2 2 0 0 1 0 4H8z"/><path fill="#a259ff" d="M8 6H6.300a2 2 0 0 0 0 4H8z"/><circle cx="10" cy="8" r="2" fill="#1abcfe"/><path fill="#0acf83" d="M8 10H6.300A2 2 0 1 0 8 12z"/></svg></button>
  <button class="task d-flex align-items-center justify-content-center" aria-label="Valorant"><svg width="14" height="14" viewBox="0 0 14 14"><rect x=".6" y=".6" width="12.800" height="12.800" fill="#111" stroke="#fa4454" stroke-width="1.200"/><path fill="#fa4454" d="m3 4 5 6.500H6L3 7zM11 4v3L9.500 9 8 7.500z"/></svg></button>
  <button class="task d-flex align-items-center justify-content-center" aria-label="Telegram"><svg width="15" height="15" viewBox="0 0 15 15"><circle cx="7.500" cy="7.500" r="7.500" fill="#2ca5e0"/><path fill="#fff" d="m2.800 7.300 8.700-3.500-1.500 8L7.500 10 6 11.300V9z"/></svg></button>
  <button class="task d-flex align-items-center justify-content-center" aria-label="Android Studio"><svg width="16" height="16" viewBox="0 0 16 16"><path fill="#3ddc84" d="M0 13a8 7.500 0 0 1 16 0z"/><path stroke="#3ddc84" d="m4 7-2-3.500M12 7l2-3.500"/><circle cx="4.500" cy="10" r=".8" fill="#17365f"/><circle cx="11.500" cy="10" r=".8" fill="#17365f"/></svg></button>
  <button class="task d-flex align-items-center justify-content-center" aria-label="OBS"><svg width="16" height="16" viewBox="0 0 16 16"><circle cx="8" cy="8" r="7.300" fill="#231f20" stroke="#b9b9b9" stroke-width="1.200"/><path fill="none" stroke="#aaa" stroke-width="1.400" d="M8 8q-3-2-1-5M8 8q3 0 4 3M8 8q-1 3-5 2.500"/></svg></button>
  <button class="task d-flex align-items-center justify-content-center" aria-label="GitHub Desktop"><svg width="16" height="16" viewBox="0 0 16 16"><circle cx="8" cy="8" r="7.500" fill="#7b2ba8"/><svg x="3" y="3" width="10" height="10" color="#fff"><use href="#octocat"/></svg></svg></button>
  <button class="task d-flex align-items-center justify-content-center" aria-label="MongoDB Compass"><svg width="16" height="16" viewBox="0 0 16 16"><circle cx="8" cy="8" r="7.800" fill="#fff"/><path fill="#116149" d="M8 3q5 5 0 9.500Q3 8 8 3z"/></svg></button>
  <button class="task d-flex align-items-center justify-content-center" aria-label="Postman"><svg width="16" height="16" viewBox="0 0 16 16"><circle cx="8" cy="8" r="8" fill="#ff6c37"/><path stroke="#fff" stroke-width="2" d="m5 11 6-6.500"/><path stroke="#ffd9ca" stroke-width="1" d="m3.500 12.500 3-2"/></svg></button>
  <button class="task d-flex align-items-center justify-content-center" aria-label="Slack"><svg width="16" height="16" viewBox="0 0 16 16"><circle cx="8" cy="8" r="7.500" fill="#fff"/><g stroke-width="2" stroke-linecap="round"><path stroke="#36c5f0" d="M6.500 3.500v.1M3.800 6.500h2.700"/><path stroke="#2eb67d" d="M9.500 3.800v2.700M12.400 6.500h.1"/><path stroke="#ecb22e" d="M9.500 12.400v.1M9.500 9.500h2.700"/><path stroke="#e01e5a" d="M6.500 9.500v2.700M3.500 9.500h.1"/></g></svg></button>
  <button class="task d-flex align-items-center justify-content-center" aria-label="React"><svg width="16" height="16" viewBox="0 0 16 16"><g fill="none" stroke="#53c1de" stroke-width="1"><ellipse cx="8" cy="8" rx="7.400" ry="2.900"/><ellipse cx="8" cy="8" rx="7.400" ry="2.900" transform="rotate(60 8 8)"/><ellipse cx="8" cy="8" rx="7.400" ry="2.900" transform="rotate(120 8 8)"/></g><circle cx="8" cy="8" r="1.400" fill="#61dafb"/></svg></button>
  <div class="tray ms-auto d-flex align-items-center">
    <svg width="12" height="7" viewBox="0 0 12 7"><path fill="none" stroke="#fff" stroke-width="1.200" d="m1 6 5-5 5 5"/></svg>
    <svg width="18" height="14" viewBox="0 0 18 14"><path fill="none" stroke="#fff" d="M6 4.500h9.500v7H4.500V8M2.500 0v3M5.500 0v3M1.500 3h5v2.500l-1 1h-3l-1-1zM4 7v5"/><path fill="#fff" d="M7 6h7.500v4.500H6V8zM16 6.500h1.500v3H16z"/></svg>
    <svg width="14" height="14" viewBox="0 0 14 14"><g fill="none" stroke="#fff" stroke-width="1.100"><path d="M1 13Q1 2 13 2" opacity=".7"/><path d="M4 13q0-8 9-8M7 13q0-5 6-5"/></g><circle cx="11.500" cy="12" r="1.500" fill="#fff"/></svg>
    <svg width="16" height="14" viewBox="0 0 16 14"><g fill="none" stroke="#fff"><path d="M.5 4.500H3l3.500-3v11L3 9.500H.5zM8.500 5q1 2 0 4"/><path d="M10.500 3q2.500 4 0 8M13 1.500q4 5.500 0 11" opacity=".5"/></g></svg>
    <span>ENG</span>
    <span class="ms-1">16:53</span>
    <button class="ms-2" aria-label="Notifications"><svg width="17" height="17" viewBox="0 0 17 17"><path fill="none" stroke="#fff" stroke-width="1.200" d="M8 13H1V2h15v8M6.500 13l2 2.500"/><path fill="#fff" d="M12.500 9q3 4-2.500 5.500 5.500 3 7-2.500-1-3-4.500-3z"/></svg></button>
    <div class="desk-edge"></div>
  </div>
</footer>

<div class="watermark"><strong>Activate Windows</strong>Go to Settings to activate Windows.</div>

<script src="https://cdn.jsdelivr.net/npm/bootstrap@5.3.0/dist/js/bootstrap.bundle.min.js"></script>
</body>
</html>
